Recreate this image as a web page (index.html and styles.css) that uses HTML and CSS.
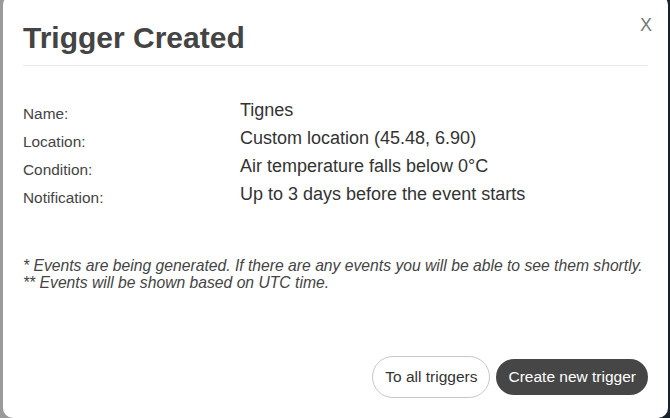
FILE: index.html
```html
<!DOCTYPE html>
<html lang="en">
<head>
<meta charset="utf-8">
<title>Trigger Created</title>
<link rel="stylesheet" href="styles.css">
</head>
<body>
<div class="modal">
  <div class="modal-header">
    <h1 class="title">Trigger Created</h1>
    <button class="close" type="button">X</button>
  </div>
  <div class="modal-body">
    <div class="details">
      <div class="label">Name:</div><div class="value">Tignes</div>
      <div class="label">Location:</div><div class="value">Custom location (45.48, 6.90)</div>
      <div class="label">Condition:</div><div class="value">Air temperature falls below 0°C</div>
      <div class="label">Notification:</div><div class="value">Up to 3 days before the event starts</div>
    </div>
    <div class="notes">
      <p>* Events are being generated. If there are any events you will be able to see them shortly.</p>
      <p>** Events will be shown based on UTC time.</p>
    </div>
  </div>
  <div class="modal-footer">
    <button class="btn btn-outline" type="button">To all triggers</button>
    <button class="btn btn-dark" type="button">Create new trigger</button>
  </div>
</div>
</body>
</html>
```
FILE: styles.css
```css
html, body {
  margin: 0;
  padding: 0;
  height: 100%;
  overflow: hidden;
}
body {
  background: linear-gradient(to right, #9a9a9a 0, #9a9a9a 50%, #17222b 50%, #17222b 100%);
  font-family: "Liberation Sans", Arial, sans-serif;
  color: #444;
}
.modal {
  box-sizing: border-box;
  width: 665px;
  height: 423px;
  margin: -5px 0 0 3px;
  padding: 0 20px 20px;
  background: #fff;
  border-radius: 10px;
  display: flex;
  flex-direction: column;
}
.modal-header {
  display: flex;
  justify-content: space-between;
  align-items: flex-start;
  padding: 26px 0 11px;
  border-bottom: 1px solid #e8e8e8;
}
.title {
  margin: 0;
  font-size: 30px;
  line-height: 33px;
  font-weight: bold;
  color: #444;
}
.close {
  margin: -5px -4px 0 0;
  padding: 0;
  border: 0;
  background: none;
  font-family: "Liberation Sans", Arial, sans-serif;
  font-size: 18px;
  line-height: 18px;
  color: #777;
  cursor: pointer;
}
.modal-body {
  flex: 1;
}
.details {
  display: grid;
  grid-template-columns: 217px 1fr;
  margin-top: 30px;
}
.label {
  font-size: 15.4px;
  line-height: 28px;
  height: 28px;
  padding-top: 4px;
  box-sizing: border-box;
  color: #444;
}
.value {
  font-size: 18px;
  line-height: 28px;
  color: #333;
}
.notes {
  margin-top: 49px;
  font-style: italic;
  font-size: 15.7px;
  line-height: 17px;
  color: #444;
}
.notes p {
  margin: 0;
}
.modal-footer {
  display: flex;
  justify-content: flex-end;
  align-items: center;
  gap: 6px;
}
.btn {
  font-family: "Liberation Sans", Arial, sans-serif;
  font-size: 15.5px;
  padding: 0 12px;
  cursor: pointer;
}
.btn-outline {
  height: 42px;
  border: 1px solid #c8c8c8;
  border-radius: 21px;
  background: #fff;
  color: #333;
}
.btn-dark {
  height: 36px;
  border: 0;
  border-radius: 18px;
  background: #464646;
  color: #fff;
}
```
